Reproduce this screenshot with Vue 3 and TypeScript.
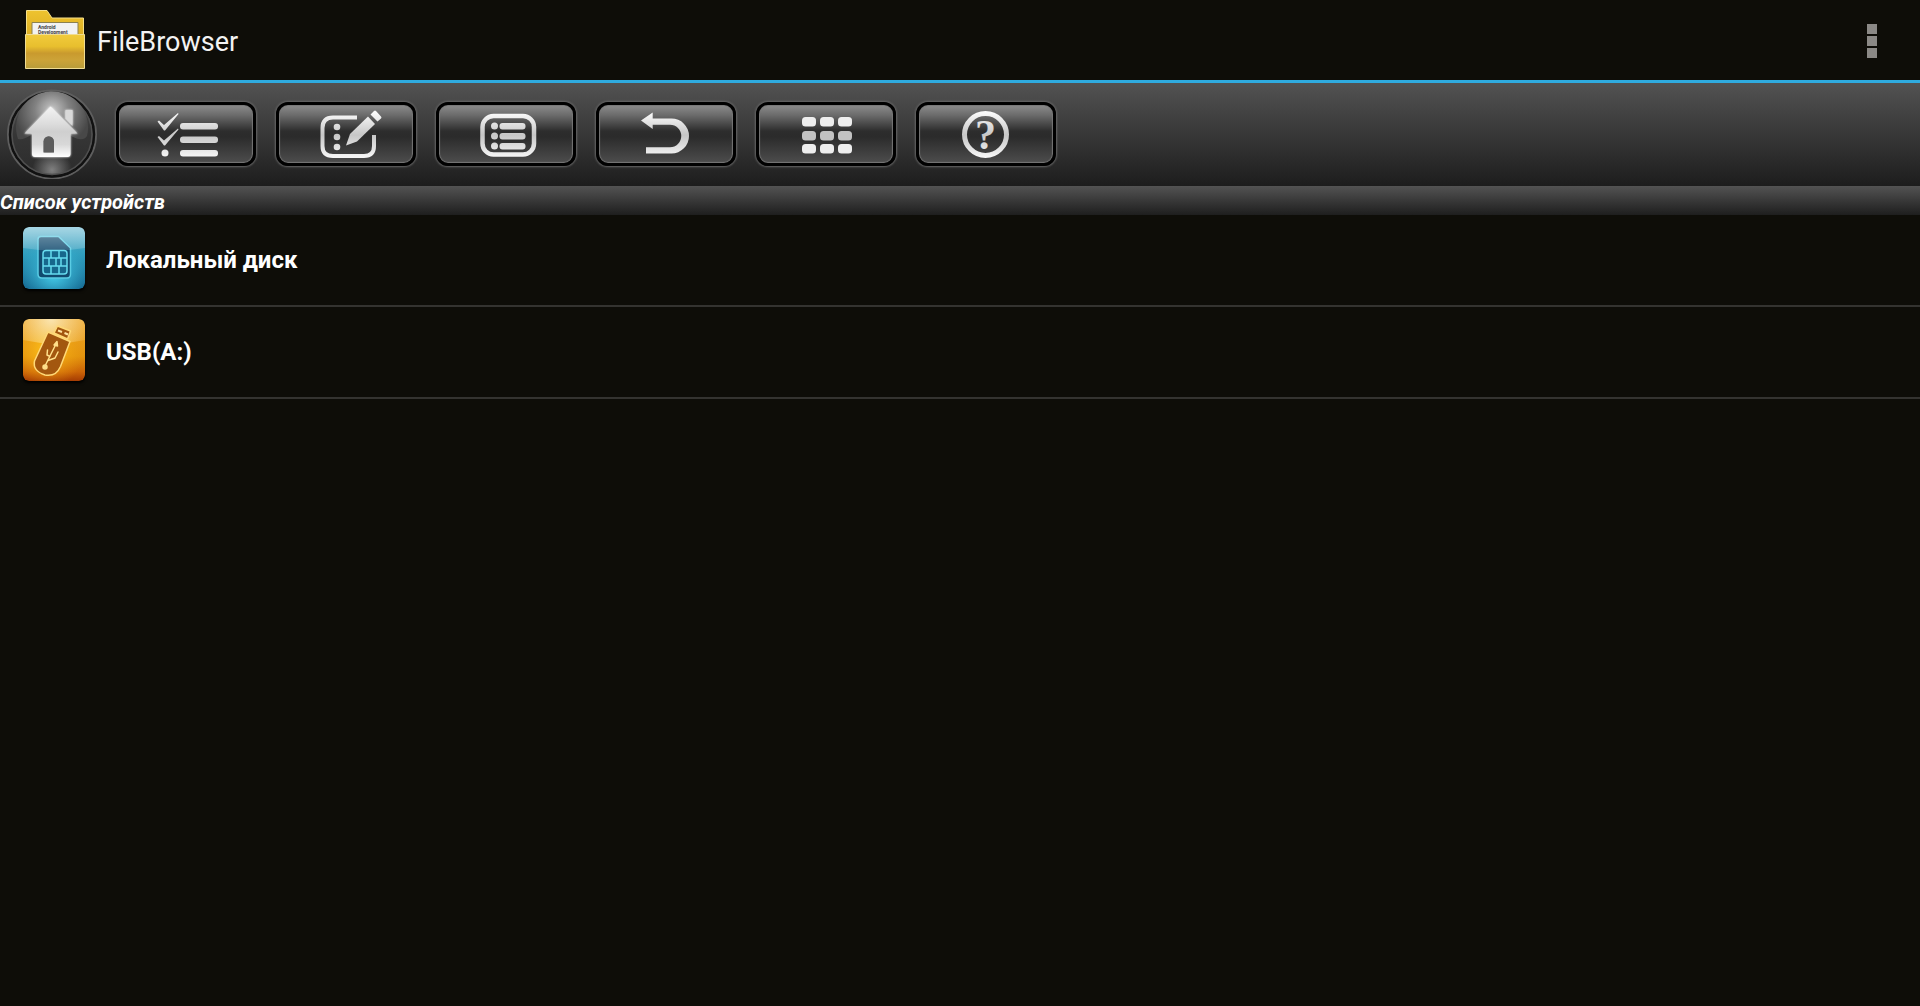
<script setup lang="ts">
import { ref } from 'vue'

type Tool = 'select' | 'edit' | 'list' | 'back' | 'grid' | 'help'

const tools: { id: Tool; label: string }[] = [
  { id: 'select', label: 'Выбор' },
  { id: 'edit', label: 'Правка' },
  { id: 'list', label: 'Список' },
  { id: 'back', label: 'Назад' },
  { id: 'grid', label: 'Вид' },
  { id: 'help', label: 'Справка' },
]

const devices = ref([
  { id: 'local', name: 'Локальный диск' },
  { id: 'usb', name: 'USB(A:)' },
])

const gridCols = [43, 61, 79]
const gridRows = [12, 26, 39]
const listRows = [21, 31, 41]
</script>

<template>
  <div class="screen">
    <header class="bar">
      <svg class="folder" width="60" height="60" viewBox="0 0 60 60" aria-hidden="true">
        <defs>
          <linearGradient id="folderBack" x1="0" y1="0" x2="0" y2="1">
            <stop offset="0" stop-color="#eec32f" />
            <stop offset="1" stop-color="#d3a21c" />
          </linearGradient>
          <linearGradient id="folderFront" x1="0" y1="0" x2="0" y2="1">
            <stop offset="0" stop-color="#f1cb3c" />
            <stop offset=".35" stop-color="#e8bf2e" />
            <stop offset=".55" stop-color="#c99a2e" />
            <stop offset=".75" stop-color="#cca338" />
            <stop offset="1" stop-color="#b89c3a" />
          </linearGradient>
        </defs>
        <path d="M1.500 .5H22L27 8H58.500V40H1.500Z" fill="url(#folderBack)" stroke="#f6e08a" />
        <path d="M7 12.500H53V30H7Z" fill="#f2f2f2" stroke="#8c8150" />
        <text x="13" y="19" class="paper">Android</text>
        <text x="13" y="23.500" class="paper">Development</text>
        <path d="M.5 24.500H59.500V58.500H.5Z" fill="url(#folderFront)" stroke="#f0dc92" />
      </svg>
      <h1 class="title">FileBrowser</h1>
      <button class="more" type="button" aria-label="Меню"><i></i><i></i><i></i></button>
    </header>

    <nav class="toolbar">
      <button class="home" type="button" aria-label="Домой">
        <svg width="90" height="90" viewBox="0 1 90 90">
          <defs>
            <linearGradient id="orb" x1="0" y1="0" x2="0" y2="1">
              <stop offset="0" stop-color="#4c4c4c" />
              <stop offset=".5" stop-color="#363636" />
              <stop offset="1" stop-color="#2b2b2b" />
            </linearGradient>
            <radialGradient id="orbTop" gradientUnits="userSpaceOnUse" cx="45" cy="22" r="38">
              <stop offset="0" stop-color="#c8c8c8" />
              <stop offset=".45" stop-color="#828282" />
              <stop offset="1" stop-color="#484848" />
            </radialGradient>
            <radialGradient id="orbLow" gradientUnits="userSpaceOnUse" cx="45" cy="82" r="20">
              <stop offset="0" stop-color="#808080" />
              <stop offset="1" stop-color="#808080" stop-opacity="0" />
            </radialGradient>
            <linearGradient id="house" x1="0" y1="0" x2="0" y2="1">
              <stop offset="0" stop-color="#f4f4f4" />
              <stop offset=".35" stop-color="#dcdcdc" />
              <stop offset=".5" stop-color="#cfcfcf" />
              <stop offset=".75" stop-color="#d8d8d8" />
              <stop offset="1" stop-color="#fff" />
            </linearGradient>
          </defs>
          <circle cx="45" cy="46.500" r="44" fill="none" stroke="#5e5e5e" stroke-width="2" />
          <circle cx="45" cy="46.500" r="42" fill="url(#orb)" stroke="#111" stroke-width="2.500" />
          <circle cx="45" cy="46.500" r="40" fill="url(#orbLow)" stroke="#505050" stroke-width="1.500" />
          <path d="M11 51A36 36 0 1 1 80 48Q76 54 66 49Q43 36 24 47Q17 52 11 51Z" fill="url(#orbTop)" />
          <g class="glow">
            <path d="M43.500 18.500L17.500 45.500H25V66Q25 69 28 69H60.500Q63.500 69 63.500 66V45.500H70.500ZM36.500 64.500V53.500A5.250 5.250 0 0 1 47 53.500V64.500Z" fill="url(#house)" fill-rule="evenodd" />
            <path d="M58.500 22H65.500V38L58.500 30.500Z" fill="#d9d9d9" />
          </g>
          <path d="M36.500 64.500V53.500A5.250 5.250 0 0 1 47 53.500V64.500Z" fill="#5c5c5c" />
        </svg>
      </button>

      <button v-for="tool in tools" :key="tool.id" class="tool" type="button" :aria-label="tool.label">
        <svg width="134" height="58" viewBox="0 0 134 58">
          <defs>
            <linearGradient :id="`metal-${tool.id}`" gradientUnits="userSpaceOnUse" x1="0" y1="8" x2="0" y2="52">
              <stop offset="0" stop-color="#fafafa" />
              <stop offset=".5" stop-color="#c6c6c6" />
              <stop offset="1" stop-color="#f6f6f6" />
            </linearGradient>
          </defs>

          <g v-if="tool.id === 'select'" :fill="`url(#metal-${tool.id})`">
            <path d="M38.500 16.500L40 15.500L45 20L59 8L59.500 9L46 25.500H45Z" />
            <path d="M38.500 32L40 31L45 35.500L59 23.500L59.500 24.500L46 40.500H45Z" />
            <circle cx="46" cy="48" r="3.500" />
            <rect x="61" y="18" width="38" height="6.500" rx="3" />
            <rect x="61" y="31.500" width="38" height="6.500" rx="3" />
            <rect x="61" y="45" width="38" height="6.500" rx="3" />
          </g>

          <g v-else-if="tool.id === 'edit'" :fill="`url(#metal-${tool.id})`">
            <path d="M78 12.500H54Q43.500 12.500 43.500 23V41Q43.500 51 54 51H85Q95 51 95 41V30" fill="none" :stroke="`url(#metal-${tool.id})`" stroke-width="4" />
            <circle cx="58" cy="22" r="3.300" />
            <circle cx="58" cy="32" r="3.300" />
            <circle cx="58" cy="42" r="3.300" />
            <path d="M67 40.500L71 29L89 11.500L96 19L78 36.500Z" />
            <path d="M91.500 9.500L95 6Q96 5 97 6L102 11.500Q103 12.500 102 13.500L98.500 16.500Z" />
          </g>

          <g v-else-if="tool.id === 'list'" :fill="`url(#metal-${tool.id})`">
            <rect x="43.500" y="11" width="51.500" height="38.500" rx="11" fill="none" :stroke="`url(#metal-${tool.id})`" stroke-width="4.500" />
            <template v-for="y in listRows" :key="y">
              <circle cx="55.500" :cy="y" r="3.500" />
              <rect x="60.500" :y="y - 3" width="26" height="6.500" rx="3" />
            </template>
          </g>

          <g v-else-if="tool.id === 'back'" :fill="`url(#metal-${tool.id})`">
            <path d="M42 15.500L53.700 7.500V13.500H72.500A17.500 17.500 0 0 1 72.500 48.500H47V42.300H71A11.200 11.200 0 0 0 71 19.800H53.700V24Z" />
          </g>

          <g v-else-if="tool.id === 'grid'">
            <template v-for="(y, r) in gridRows" :key="y">
              <rect v-for="x in gridCols" :key="x" :x="x" :y="y" width="14" height="9.500" rx="3.500" :fill="r === 1 ? '#c2c2c2' : '#eee'" />
            </template>
          </g>

          <g v-else :fill="`url(#metal-${tool.id})`">
            <circle cx="66.500" cy="29.500" r="21" fill="none" :stroke="`url(#metal-${tool.id})`" stroke-width="5" />
            <text x="66.500" y="44" text-anchor="middle" class="question">?</text>
          </g>
        </svg>
      </button>
    </nav>

    <main>
      <h2 class="section">Список устройств</h2>
      <ul class="devices">
        <li v-for="device in devices" :key="device.id">
          <button class="device" type="button">
            <svg v-if="device.id === 'local'" class="tile" width="62" height="62" viewBox="0 0 62 62" aria-hidden="true">
              <defs>
                <linearGradient id="blue" x1="0" y1="0" x2="0" y2="1">
                  <stop offset="0" stop-color="#5fb5cf" />
                  <stop offset=".45" stop-color="#2f9dbd" />
                  <stop offset="1" stop-color="#14668f" />
                </linearGradient>
                <radialGradient id="blueGlow" cx=".5" cy=".75" r=".55">
                  <stop offset="0" stop-color="#48d2ee" />
                  <stop offset="1" stop-color="#38b5d6" stop-opacity="0" />
                </radialGradient>
                <linearGradient id="gloss" x1="0" y1="0" x2="0" y2="1">
                  <stop offset="0" stop-color="#fff" stop-opacity=".45" />
                  <stop offset="1" stop-color="#fff" stop-opacity=".15" />
                </linearGradient>
              </defs>
              <rect width="62" height="62" rx="6" fill="url(#blue)" />
              <rect width="62" height="62" rx="6" fill="url(#blueGlow)" />
              <path d="M18 9.500H35.500L47.500 21V47Q47.500 51 44 51H19Q15 51 15 47V12.500Q15 9.500 18 9.500Z" fill="#114a6e" stroke="#5accE4" stroke-width="1.500" />
              <g fill="none" stroke="#66dcef" stroke-width="1.500">
                <rect x="20" y="23.500" width="24" height="23.500" rx="3" fill="#17678c" />
                <path d="M20 31H44M20 39H44M28 23.500V31M36 23.500V31M26 31V39M33 31V39M38 31V39M28 39V47M36 39V47" />
              </g>
              <path d="M0 21V6Q0 0 6 0H56Q62 0 62 6V21Q31 26 0 21Z" fill="url(#gloss)" />
            </svg>
            <svg v-else class="tile" width="62" height="62" viewBox="0 0 62 62" aria-hidden="true">
              <defs>
                <linearGradient id="amber" x1="0" y1="0" x2="0" y2="1">
                  <stop offset="0" stop-color="#eda428" />
                  <stop offset=".6" stop-color="#e3930d" />
                  <stop offset=".85" stop-color="#cc6507" />
                  <stop offset="1" stop-color="#a53c03" />
                </linearGradient>
                <radialGradient id="amberGlow" cx=".4" cy=".5" r=".6">
                  <stop offset="0" stop-color="#ffc61c" />
                  <stop offset="1" stop-color="#f0a010" stop-opacity="0" />
                </radialGradient>
                <radialGradient id="amberGloss" gradientUnits="userSpaceOnUse" cx="28" cy="0" r="40">
                  <stop offset="0" stop-color="#fffbe0" stop-opacity=".75" />
                  <stop offset="1" stop-color="#fff3c0" stop-opacity=".12" />
                </radialGradient>
              </defs>
              <rect width="62" height="62" rx="6" fill="url(#amber)" />
              <rect width="62" height="62" rx="6" fill="url(#amberGlow)" />
              <path d="M0 21V6Q0 0 6 0H56Q62 0 62 6V21Q31 28 0 21Z" fill="url(#amberGloss)" />
              <g fill="#a3570f" stroke="#ffd977" stroke-width="1.500" stroke-linejoin="round">
                <path d="M31 14L34.500 7L47.500 12L44.500 20Z" />
                <path d="M25 13L47 22.500L37.500 47.500Q33 58 22 56Q9.500 52 11.500 42Z" />
              </g>
              <path d="M35 11.500L39 13M41.500 14L45 15.500" stroke="#ffe3a0" stroke-width="2" />
              <g fill="none" stroke="#ffdf8a" stroke-width="1.500" stroke-linecap="round" stroke-linejoin="round">
                <path d="M22 47L33 25M27 37.500L24 36L24.500 31M25 41.500L32 39L35 33" />
                <circle cx="22" cy="48" r="2" fill="#ffdf8a" />
                <path d="M31 26L34 22.500L34.500 27Z" fill="#ffdf8a" />
              </g>
            </svg>
            <span>{{ device.name }}</span>
          </button>
        </li>
      </ul>
    </main>
  </div>
</template>

<style>
body {
  margin: 0;
  background: #0e0d08;
}
</style>

<style scoped>
.screen {
  min-height: 100vh;
  background: #0e0d08;
  color: #fff;
  font-family: Roboto, 'Liberation Sans', sans-serif;
}

button {
  margin: 0;
  padding: 0;
  border: 0;
  background: none;
  color: inherit;
  font: inherit;
  cursor: pointer;
}

svg {
  display: block;
}

.bar {
  display: flex;
  align-items: center;
  height: 78px;
  padding: 2px 43px 0 25px;
  border-bottom: 3px solid #2fabdf;
}

.folder {
  margin-bottom: 2px;
}

.paper {
  font-size: 5px;
  font-weight: 700;
  fill: #444;
}

.title {
  flex: 1;
  margin: 0 0 0 12px;
  padding-top: 2px;
  font-size: 27px;
  font-weight: 400;
  line-height: 32px;
  color: #f3f3f3;
}

.more {
  display: flex;
  flex-direction: column;
  gap: 2px;
}

.more i {
  width: 10px;
  height: 10px;
  background: #8b8986;
}

.toolbar {
  display: flex;
  align-items: center;
  gap: 20px;
  height: 102px;
  padding: 0 7px 1px;
  background: linear-gradient(#525252, #1d1d1d);
}

.home {
  width: 89px;
  height: 90px;
}

.glow {
  filter: drop-shadow(0 0 1px #fff);
}

.tool {
  border: 3px solid #000;
  border-radius: 12px;
  background: linear-gradient(#8d8d8d, #6a6a6a 18%, #2d2d2d 45%, #2b2b2b 55%, #4d4d4d);
  box-shadow: 0 0 2px 1px #666, inset 0 0 1px 1px #777;
}

.question {
  font-family: 'Liberation Serif', serif;
  font-size: 42px;
  font-weight: 700;
}

.section {
  margin: 0;
  height: 29px;
  font-size: 20px;
  font-style: italic;
  font-weight: 700;
  line-height: 32px;
  background: linear-gradient(#535353, #1e1e1e);
}

.devices {
  margin: 0;
  padding: 0;
  list-style: none;
}

.devices li {
  border-bottom: 2px solid #343330;
}

.device {
  display: flex;
  align-items: center;
  gap: 21px;
  width: 100%;
  height: 90px;
  padding: 0 23px;
  font-size: 24px;
  font-weight: 700;
  text-align: left;
}

.tile {
  margin-bottom: 4px;
  border-radius: 6px;
  box-shadow: 0 2px 3px #000;
}
</style>
